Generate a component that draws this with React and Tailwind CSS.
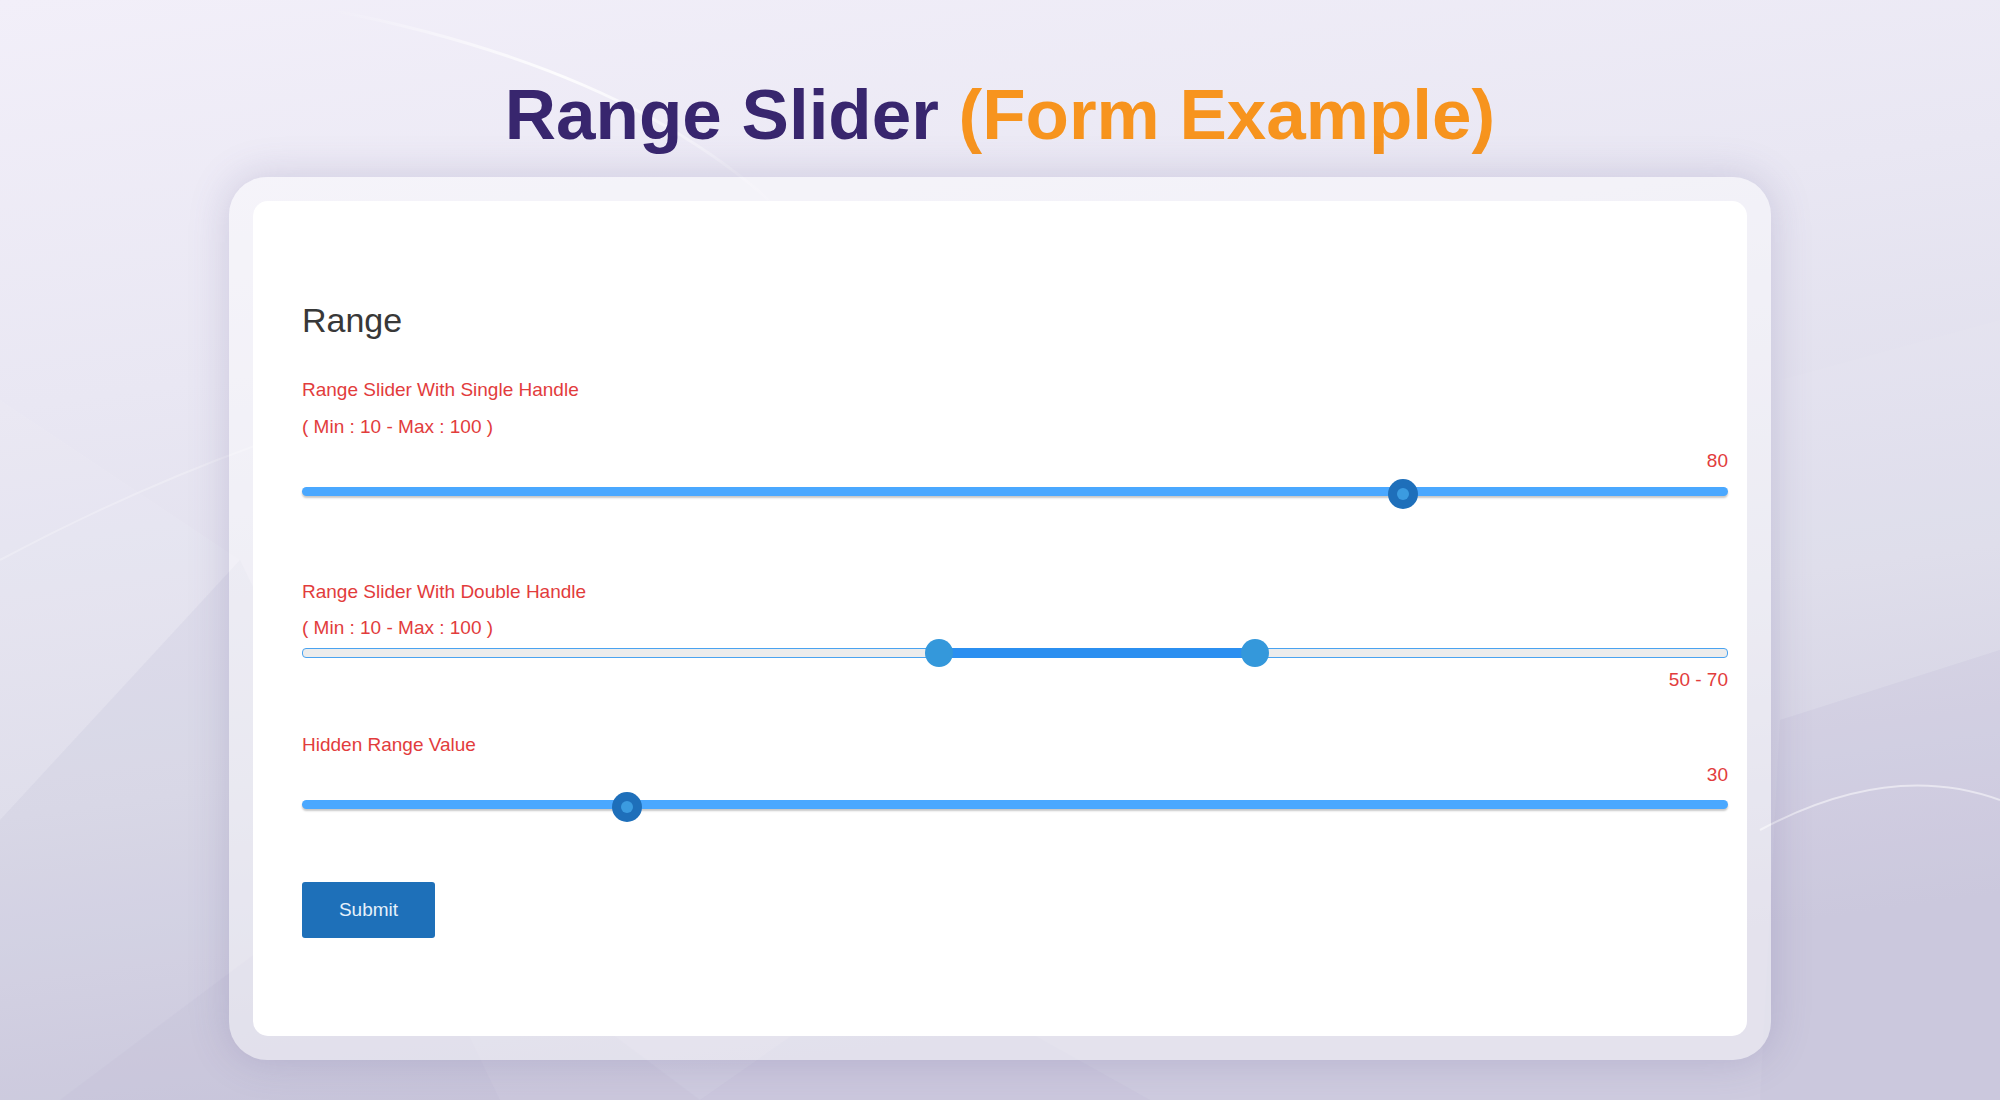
import React from "react";

const MIN = 10;
const MAX = 100;
const pct = (v) => ((v - MIN) / (MAX - MIN)) * 100;

// Decorative backdrop: soft facets and thin light arcs
function Backdrop() {
  return (
    <svg
      className="absolute inset-0 h-full w-full"
      viewBox="0 0 2000 1100"
      preserveAspectRatio="none"
    >
      <defs>
        <linearGradient id="bg" x1="0" y1="0" x2="0.25" y2="1">
          <stop offset="0" stopColor="#f2eff9" />
          <stop offset="0.35" stopColor="#e9e7f3" />
          <stop offset="0.7" stopColor="#dddcea" />
          <stop offset="1" stopColor="#cecbdf" />
        </linearGradient>
        <linearGradient id="arc" x1="0" y1="0" x2="1" y2="0">
          <stop offset="0" stopColor="#ffffff" stopOpacity="0" />
          <stop offset="0.5" stopColor="#ffffff" stopOpacity="0.85" />
          <stop offset="1" stopColor="#ffffff" stopOpacity="0" />
        </linearGradient>
      </defs>
      <rect width="2000" height="1100" fill="url(#bg)" />
      <polygon points="0,400 240,560 0,820" fill="#ffffff" opacity="0.07" />
      <polygon points="0,820 240,560 500,1100 0,1100" fill="#b9b4d0" opacity="0.12" />
      <polygon points="60,1100 380,860 700,1100" fill="#b3aacb" opacity="0.12" />
      <polygon points="700,1100 900,960 1150,1100" fill="#b3aacb" opacity="0.1" />
      <polygon points="1780,720 2000,650 2000,1100 1760,1100" fill="#c2bed8" opacity="0.18" />
      <polygon points="1780,380 2000,320 2000,650 1780,720" fill="#ffffff" opacity="0.06" />
      <path d="M330 10 Q 640 70 790 220" stroke="url(#arc)" strokeWidth="3" fill="none" />
      <path d="M1760 830 Q 1890 760 2000 800" stroke="#ffffff" strokeOpacity="0.5" strokeWidth="2" fill="none" />
      <path d="M0 560 Q 150 480 300 430" stroke="#ffffff" strokeOpacity="0.25" strokeWidth="2" fill="none" />
    </svg>
  );
}

function SingleSlider({ value }) {
  return (
    <div className="relative h-[9px] rounded-full bg-[#4aa8ff] shadow-[0_2px_2px_rgba(0,0,0,0.22)]">
      <div className="absolute inset-y-0 left-[15px] right-[15px]">
        <div
          className="absolute top-[calc(50%+2px)] flex h-[30px] w-[30px] -translate-x-1/2 -translate-y-1/2 items-center justify-center rounded-full bg-[#1e6fba]"
          style={{ left: `${pct(value)}%` }}
        >
          <div className="h-[12px] w-[12px] rounded-full bg-[#3b9be0]" />
        </div>
      </div>
    </div>
  );
}

function DoubleSlider({ low, high }) {
  const a = pct(low);
  const b = pct(high);
  return (
    <div className="relative h-[10px] rounded-[4px] border border-[#4aa3f0] bg-[#ececec]">
      <div className="absolute inset-y-0 left-[3px] right-[-3px]">
        <div
          className="absolute top-[-1px] bottom-[-1px] bg-[#2b8ff0]"
          style={{ left: `${a}%`, width: `${b - a}%` }}
        />
        {[a, b].map((p, i) => (
          <div
            key={i}
            className="absolute top-1/2 h-[28px] w-[28px] -translate-x-1/2 -translate-y-1/2 rounded-full bg-[#3498db]"
            style={{ left: `${p}%` }}
          />
        ))}
      </div>
    </div>
  );
}

export default function App() {
  return (
    <div className="relative h-[1100px] w-[2000px] overflow-hidden font-['Liberation_Sans',Arial,sans-serif]">
      <Backdrop />
      <div className="relative flex flex-col items-center pt-[79px]">
        <h1 className="text-[71px] font-bold leading-[72px]">
          <span className="text-[#38266e]">Range Slider </span>
          <span className="text-[#f7941e]">(Form Example)</span>
        </h1>

        <div className="mt-[26px] w-[1542px] rounded-[38px] bg-white/45 p-[24px] shadow-[0_0_40px_rgba(90,80,140,0.22)]">
          <form className="flex flex-col rounded-[15px] bg-white pb-[98px] pl-[49px] pr-[19px] pt-[99px]">
            <h2 className="text-[34px] leading-[40px] text-[#383838]">Range</h2>

            <p className="mt-[38px] text-[19px] leading-[24px] text-[#e23c3c]">
              Range Slider With Single Handle
            </p>
            <p className="mt-[13px] text-[19px] leading-[24px] text-[#e23c3c]">
              ( Min : 10 - Max : 100 )
            </p>
            <p className="mt-[10px] text-right text-[19px] leading-[24px] text-[#e23c3c]">80</p>
            <div className="mt-[14px]">
              <SingleSlider value={80} />
            </div>

            <p className="mt-[84px] text-[19px] leading-[24px] text-[#e23c3c]">
              Range Slider With Double Handle
            </p>
            <p className="mt-[12px] text-[19px] leading-[24px] text-[#e23c3c]">
              ( Min : 10 - Max : 100 )
            </p>
            <div className="mt-[8px]">
              <DoubleSlider low={50} high={70} />
            </div>
            <p className="mt-[10px] text-right text-[19px] leading-[24px] text-[#e23c3c]">50 - 70</p>

            <p className="mt-[41px] text-[19px] leading-[24px] text-[#e23c3c]">Hidden Range Value</p>
            <p className="mt-[6px] text-right text-[19px] leading-[24px] text-[#e23c3c]">30</p>
            <div className="mt-[13px]">
              <SingleSlider value={30} />
            </div>

            <div className="mt-[73px]">
              <button
                type="button"
                className="h-[56px] w-[133px] rounded-[3px] bg-[#1e70b9] text-[19px] text-[#e6f1fb]"
              >
                Submit
              </button>
            </div>
          </form>
        </div>
      </div>
    </div>
  );
}
